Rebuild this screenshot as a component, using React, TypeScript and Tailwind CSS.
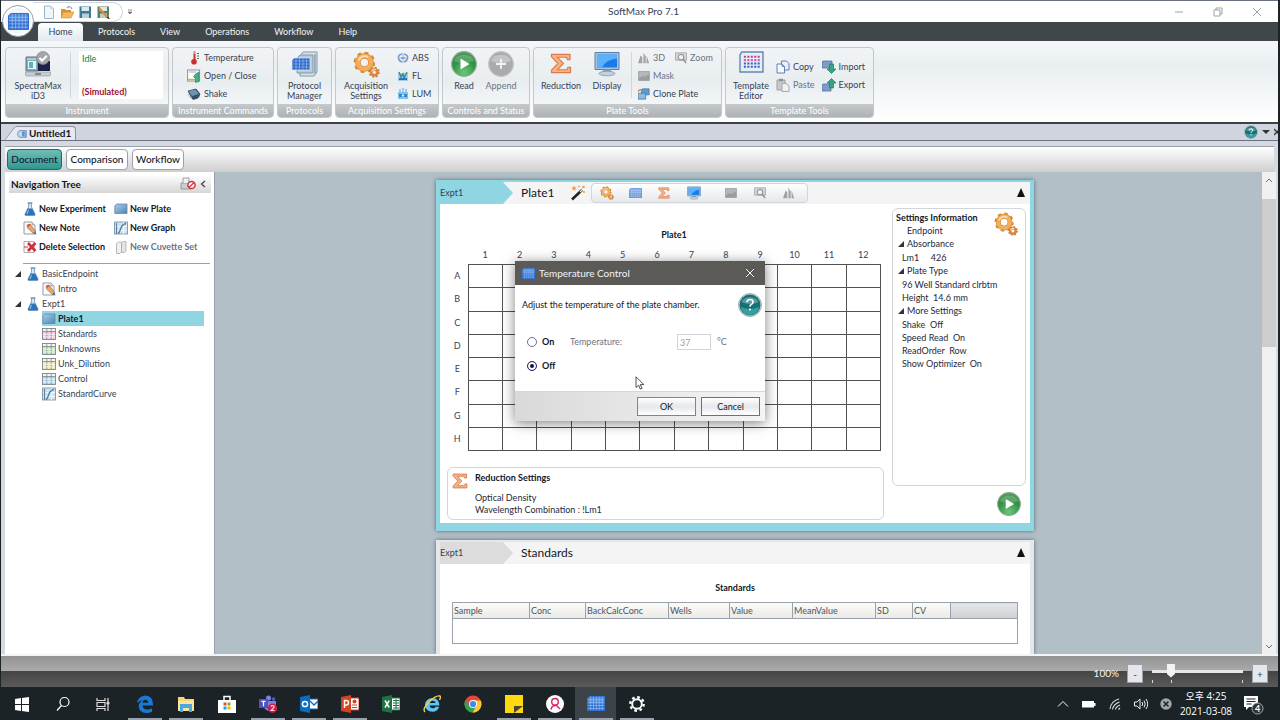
import React from "react";

interface iconProps {
  className?: string;
}

/* ---------- ICONS ---------- */

function PlateIcon({ className }: iconProps) {
  return (
    <svg viewBox="0 0 22 18" className={className} preserveAspectRatio="none">
      <path d="M3 0h18a1 1 0 0 1 1 1v16a1 1 0 0 1-1 1H1a1 1 0 0 1-1-1V3z" fill="#2f6fd0" />
      <path d="M3 1h18v8H1V3z" fill="#5b98ea" opacity=".6" />
      <path
        d="M1 4.500h20M1 8h20M1 11.500h20M1 15h20M4.500 1v16M8 1v16M11.500 1v16M15 1v16M18.500 1v16"
        stroke="#a5c9f8"
        strokeWidth=".7"
      />
    </svg>
  );
}

function FlaskIcon({ className }: iconProps) {
  return (
    <svg viewBox="0 0 12 14" className={className}>
      <path d="M4.500 1v4L1 12q-.5 1.500 1 1.500h8q1.500 0 1-1.500L7.500 5V1z" fill="#d5e6f3" stroke="#6d93b5" strokeWidth=".8" />
      <path d="M3.800 6.500h4.400L11 12.200q.2 1-.8 1H1.800q-1 0-.8-1z" fill="#2d74b5" />
      <path d="M3.500 1h5" stroke="#6d93b5" strokeWidth="1.200" />
      <path d="M4.500 8l-1.500 4" stroke="#9cc8ea" />
    </svg>
  );
}

function NoteIcon({ className }: iconProps) {
  return (
    <svg viewBox="0 0 14 14" className={className}>
      <path d="M1 1h8l3 3v9H1z" fill="#fafafa" stroke="#8d9299" strokeWidth=".9" />
      <path d="M9 1v3h3" fill="#d8dde2" stroke="#8d9299" strokeWidth=".7" />
      <path d="M4 4l3-1 5.500 7-2 2.500L4.500 7z" fill="#e8a667" stroke="#8c6a4c" strokeWidth=".6" />
      <path d="M10 12.500l2.500-2.500 1 3.500z" fill="#5d6fa8" />
      <path d="M4 4l3-1 .8 1L5 6z" fill="#d9534a" />
    </svg>
  );
}

function DeleteIcon({ className }: iconProps) {
  return (
    <svg viewBox="0 0 14 14" className={className}>
      <path d="M1 1.500h10v11H1z" fill="#fafafa" stroke="#a3a3a8" strokeWidth=".9" />
      <path d="M5 3l7.500 8M12.500 3L5 11" stroke="#d32f37" strokeWidth="2.600" />
      <path d="M1 7h4" stroke="#d32f37" />
    </svg>
  );
}

function SmallPlateIcon({ className }: iconProps) {
  return (
    <svg viewBox="0 0 14 12" className={className}>
      <defs>
        <linearGradient id="smallPlate" x1="0" y1="0" x2="1" y2="1">
          <stop offset="0" stopColor="#a9cde8" />
          <stop offset="1" stopColor="#4d86b8" />
        </linearGradient>
      </defs>
      <path d="M2.500 1H13v9.500H.800V3z" fill="url(#smallPlate)" stroke="#5f88aa" strokeWidth=".8" />
    </svg>
  );
}

function GraphIcon({ className }: iconProps) {
  return (
    <svg viewBox="0 0 14 14" className={className}>
      <rect x=".5" y="1" width="13" height="12" fill="#cfe2f0" stroke="#7c97ae" strokeWidth=".9" />
      <path d="M1 9.500h12M1 5.500h12M9.500 1v12" stroke="#fff" strokeWidth=".7" />
      <path d="M4 12.500C7.500 11 5 3.500 12 2.500" fill="none" stroke="#4d7ea8" strokeWidth="1.400" />
      <path d="M2.500 2v11" stroke="#5b84a6" strokeWidth="1.200" />
    </svg>
  );
}

function CuvetteIcon({ className }: iconProps) {
  return (
    <svg viewBox="0 0 14 14" className={className}>
      <path d="M2.500 3.500l2-1.500h3v10l-1.500 1.500H2.500z" fill="#f0f0f0" stroke="#a9a9a9" strokeWidth=".8" />
      <path d="M7.500 3l2-1.500H12v9.500L10.500 12.500h-3z" fill="#e3e3e3" stroke="#a9a9a9" strokeWidth=".8" />
    </svg>
  );
}

function GroupTableIcon({ tint }: { tint: string }) {
  return (
    <svg viewBox="0 0 14 12" className="h-3 w-3.5">
      <rect x=".5" y=".5" width="13" height="11" fill={tint} stroke="#7e868c" strokeWidth=".9" />
      <rect x="1" y="1" width="12" height="2" fill="#f6f6f6" />
      <path d="M.5 3.500h13M4.800.5v11M9.200.5v11" stroke="#7e868c" strokeWidth=".8" />
      <path d="M1 6.200h12M1 8.900h12" stroke="#fff" strokeWidth=".8" />
    </svg>
  );
}

function GearsIcon({ className }: iconProps) {
  return (
    <svg viewBox="0 0 26 26" className={className} fill="none">
      <circle cx="11" cy="11" r="9" stroke="#d98a35" strokeWidth="2.800" strokeDasharray="3.530 3.530" />
      <circle cx="11" cy="11" r="6.300" stroke="#d98a35" strokeWidth="5.400" />
      <circle cx="11" cy="11" r="6.300" stroke="#f2ae5c" strokeWidth="4" />
      <path d="M5.500 9a6 6 0 0 1 9-3" stroke="#fbdcae" strokeWidth="1.800" />
      <circle cx="20.500" cy="20.500" r="4.300" stroke="#c9743a" strokeWidth="2" strokeDasharray="1.690 1.690" />
      <circle cx="20.500" cy="20.500" r="3" stroke="#d98747" strokeWidth="2.800" />
      <path d="M18 19.500a3 3 0 0 1 4-1.500" stroke="#fbdcae" strokeWidth="1.200" />
    </svg>
  );
}

function SigmaIcon({ className }: iconProps) {
  return (
    <svg viewBox="0 0 22 22" className={className} preserveAspectRatio="none">
      <path
        d="M1.500 1.500h18.500v5.500h-2.500l-1-2.500H7.500L13.500 11l-6 6.500h9.500l1-2.500h2.500v5.500H1.500V18L8 11 1.500 4z"
        fill="#f5b488"
        stroke="#dd7a45"
        strokeWidth="1.200"
      />
    </svg>
  );
}

function MonitorIcon({ className }: iconProps) {
  return (
    <svg viewBox="0 0 26 25" className={className}>
      <path d="M1 1h24v17H1z" fill="#a9c3dc" stroke="#5c7ea3" />
      <path d="M3 3h20v13H3z" fill="#1a7be8" />
      <path d="M3 3h20v4Q12 8 8 16H3z" fill="#5db0fa" />
      <path d="M9 18h8v3H9z" fill="#8ca4bb" />
      <ellipse cx="13" cy="22" rx="8" ry="2.300" fill="#c3d0dc" stroke="#7890a8" strokeWidth=".7" />
    </svg>
  );
}

function PlayIcon({ className }: iconProps) {
  return (
    <svg viewBox="0 0 26 26" className={className}>
      <defs>
        <radialGradient id="playGreen" cx=".5" cy=".85" r=".9">
          <stop offset="0" stopColor="#6cc77a" />
          <stop offset=".6" stopColor="#2c8f41" />
          <stop offset="1" stopColor="#5a9b68" />
        </radialGradient>
      </defs>
      <circle cx="13" cy="13" r="12.300" fill="url(#playGreen)" stroke="#88a890" strokeWidth="1.200" />
      <path d="M3 10a10.500 9 0 0 1 20 0q-10 4-20 0z" fill="#fff" opacity=".2" />
      <path d="M9.500 7.500v11l9-5.500z" fill="#fff" />
    </svg>
  );
}

function AppendIcon() {
  return (
    <svg viewBox="0 0 26 26" className="size-[26px]">
      <circle cx="13" cy="13" r="12.300" fill="#a9abad" stroke="#c0c2c4" strokeWidth="1.200" />
      <path d="M3 10a10.500 9 0 0 1 20 0q-10 4-20 0z" fill="#fff" opacity=".3" />
      <path d="M13 8v10M8 13h10" stroke="#f2f2f2" strokeWidth="1.800" />
    </svg>
  );
}

function HelpIcon({ className }: iconProps) {
  return (
    <svg viewBox="0 0 24 24" className={className}>
      <circle cx="12" cy="12" r="11.500" fill="#d5dede" stroke="#8aa0a0" strokeWidth=".8" />
      <circle cx="12" cy="12" r="10.500" fill="#167078" />
      <path d="M3 14a9 8 0 0 0 18 0q-9 4-18 0z" fill="#46b0ac" opacity=".7" />
      <path d="M3.500 9a9 7 0 0 1 17 0q-8 4-17 0z" fill="#fff" opacity=".3" />
      <path d="M9 9.200q0-2.700 3-2.700t3 2.500q0 1.600-1.600 2.400T12 13.700" fill="none" stroke="#fff" strokeWidth="1.600" />
      <circle cx="12" cy="16.500" r="1.100" fill="#fff" />
    </svg>
  );
}

function InstrumentIcon() {
  return (
    <svg viewBox="0 0 26 26" className="size-[26px]">
      <path d="M1 6h12v14H1z" fill="#8da9b8" stroke="#5a7480" />
      <path d="M13 10h12v10H13z" fill="#1c2347" />
      <path d="M3 10h8v8H3z" fill="#e6f4f6" />
      <path d="M4 11h4v6H4z" fill="#4fb6c4" />
      <path d="M2 8h9" stroke="#d8e8ee" />
      <path d="M0 21h26l-1 4H1z" fill="#c9ced3" stroke="#8a9299" strokeWidth=".6" />
      <path d="M10 23h6" stroke="#444" />
      <circle cx="18" cy="7" r="6.500" fill="#a3a6a9" stroke="#84878a" strokeWidth=".7" />
      <path d="M14.500 7l2.500 2.700 4.800-5" fill="none" stroke="#fff" strokeWidth="2" />
    </svg>
  );
}

function ProtocolIcon() {
  return (
    <svg viewBox="0 0 28 28" className="size-7">
      <path d="M12 1h14v20l-3 4H9V5z" fill="#dbe4ec" stroke="#8197a8" />
      <path d="M9 4h13v18H6V7z" fill="#b9c9d7" stroke="#8197a8" />
      <path d="M24 23V3" stroke="#9db0c0" strokeWidth="2" />
      <path d="M3 7h16v12H1V9z" fill="#2b65c8" stroke="#dce8f5" strokeWidth=".8" />
      <path d="M2 10h16M2 13h16M2 16h16M5 8v11M8.500 8v11M12 8v11M15.500 8v11" stroke="#8fbaf0" strokeWidth=".7" />
    </svg>
  );
}

function TemplateIcon() {
  return (
    <svg viewBox="0 0 26 23" className="h-[22px] w-[25px]">
      <path d="M3 1h22v21H1V4z" fill="#e9eef5" stroke="#5d89b8" strokeWidth="1.500" />
      <path d="M5 6h17" stroke="#c0408c" strokeWidth="2.200" strokeDasharray="2.200 1.400" />
      <path d="M5 9.500h17" stroke="#d65ba3" strokeWidth="2.200" strokeDasharray="2.200 1.400" />
      <path d="M5 13h17M5 16.500h17" stroke="#3b64c8" strokeWidth="2.200" strokeDasharray="2.200 1.400" />
    </svg>
  );
}

function ThermoIcon() {
  return (
    <svg viewBox="0 0 14 14" className="size-3.5">
      <path d="M7.500 1v8" stroke="#d9a0a0" strokeWidth="2.600" strokeLinecap="round" />
      <path d="M7.500 3v7" stroke="#c9302c" strokeWidth="1.400" />
      <circle cx="7" cy="10.800" r="2.800" fill="#c9302c" />
      <path d="M10 2.500h2M10 5h2M10 7.500h2" stroke="#555" strokeWidth=".9" />
    </svg>
  );
}

function OpenCloseIcon() {
  return (
    <svg viewBox="0 0 14 14" className="size-3.5">
      <rect x=".6" y="1" width="12" height="11" fill="#fff" stroke="#8b9198" />
      <path d="M2 3h7" stroke="#aab" />
      <path d="M1 10.500h9" stroke="#e0b13c" strokeWidth="1.500" />
      <path d="M8.500 5l3.500-2v9.500l-3.500 1V9.500l-2-1.700z" fill="#43b28b" stroke="#1f7d5c" strokeWidth=".6" />
    </svg>
  );
}

function ShakeIcon() {
  return (
    <svg viewBox="0 0 14 14" className="size-3.5">
      <path d="M1 4l8-2 4 5-2 4-5 1.500z" fill="#31506f" stroke="#1f3042" strokeWidth=".7" />
      <path d="M1.500 4l7-1.500L12 7 5 9z" fill="#6f93b3" />
      <path d="M1 7l3 4.500M13 9.500L9.500 12" stroke="#8a9aa8" strokeWidth=".8" fill="none" />
    </svg>
  );
}

function AbsIcon() {
  return (
    <svg viewBox="0 0 12 12" className="size-3">
      <path d="M5 2Q1 3 1.500 6T5 10M7 2q4 1 3.500 4T7 10" fill="none" stroke="#7e9fcb" strokeWidth="1.700" />
      <path d="M6 1v10" stroke="#a8bfdc" strokeWidth="1.200" />
      <path d="M3.500 6h5" stroke="#3f76bc" />
    </svg>
  );
}

function FlIcon() {
  return (
    <svg viewBox="0 0 12 12" className="size-3">
      <path d="M1 3h10v8H1z" fill="#a6cbe8" />
      <path d="M2 2l2 5 2-3 1 4 3-6" fill="none" stroke="#2f8f8a" strokeWidth="1.400" />
      <path d="M2 9h8" stroke="#2f72b8" strokeWidth="1.800" />
    </svg>
  );
}

function LumIcon() {
  return (
    <svg viewBox="0 0 12 12" className="size-3">
      <path d="M1 4h10v7H1z" fill="#7cc3ee" />
      <path d="M3 1v3M6 0v4M9 1v3" stroke="#5fb4e6" strokeWidth="1.200" />
      <path d="M2 6h8v3H2z" fill="#2f86c8" />
      <circle cx="6" cy="7.500" r="1.200" fill="#d9f0ff" />
    </svg>
  );
}

function CubesIcon() {
  return (
    <svg viewBox="0 0 14 14" className="size-3">
      <path d="M0 13L3 4l2 2v7zM6 13V1l3 4v8zM10 13V4l3 9z" fill="#a0a3a6" />
      <path d="M6 13V1l1 2v10z" fill="#c9cbcd" />
    </svg>
  );
}

function ZoomPlateIcon() {
  return (
    <svg viewBox="0 0 14 14" className="size-3">
      <path d="M.5 1h13v8.500H.5z" fill="#d5d7d9" stroke="#9b9ea1" strokeWidth=".9" />
      <circle cx="7" cy="6" r="3.200" fill="#f3f3f3" stroke="#8d9093" strokeWidth="1.200" />
      <path d="M9.500 8.500l3.500 4.500" stroke="#8d9093" strokeWidth="1.600" />
    </svg>
  );
}

function MaskIcon() {
  return (
    <svg viewBox="0 0 14 12" className="h-2.5 w-3">
      <path d="M.5.5h13v11H.5z" fill="#b4b7b9" stroke="#999c9f" />
      <path d="M1 9l4-3 3 1 5-3v7H1z" fill="#9a9da0" />
    </svg>
  );
}

function ClonePlateIcon() {
  return (
    <svg viewBox="0 0 14 14" className="size-3">
      <path d="M5 1h8v7H4V2z" fill="#5f9bd0" stroke="#3d6f9e" strokeWidth=".8" />
      <path d="M1 6h8v7H0V7z" fill="#8dbbe0" stroke="#3d6f9e" strokeWidth=".8" />
      <path d="M0 5q0-3 3.500-3" fill="none" stroke="#dd7c33" strokeWidth="1.500" />
    </svg>
  );
}

function CopyIcon() {
  return (
    <svg viewBox="0 0 14 14" className="size-3.5">
      <path d="M5.500 1h5l2.500 2.500V10H5.500z" fill="#e9effa" stroke="#5475ad" strokeWidth=".9" />
      <path d="M1 4h5l2.500 2.500V13H1z" fill="#f5f8fe" stroke="#5475ad" strokeWidth=".9" />
      <path d="M6 4v2.500h2.500" fill="none" stroke="#5475ad" strokeWidth=".8" />
    </svg>
  );
}

function PasteIcon() {
  return (
    <svg viewBox="0 0 14 14" className="size-3.5">
      <path d="M1 2h8v10H1z" fill="#c7c9cb" stroke="#a0a2a4" />
      <path d="M3 .8h4v2.400H3z" fill="#8f9193" />
      <path d="M6 5.500h4l3 2.500v5.500H6z" fill="#f1f1f1" stroke="#a0a2a4" strokeWidth=".9" />
    </svg>
  );
}

function TransferIcon({ up }: { up?: boolean }) {
  return (
    <svg viewBox="0 0 14 14" className="size-3.5">
      <path
        d={up ? "M1 6h8v7H0V7z" : "M1 1h9v7H0V2z"}
        fill="#7d9cc8"
        stroke="#5674a4"
        strokeWidth=".8"
      />
      <path
        d={up ? "M7.500 10V5H5l4.500-4.500L14 5h-2.500v5z" : "M7.500 4v5H5l4.500 4.500L14 9h-2.500V4z"}
        fill="#36a583"
        stroke="#1b7a5c"
        strokeWidth=".7"
      />
    </svg>
  );
}

function WandIcon() {
  return (
    <svg viewBox="0 0 16 16" className="size-4">
      <path d="M2 14.500L12 5" stroke="#222" strokeWidth="2.600" />
      <path d="M10 7l2-2" stroke="#eee" strokeWidth="1.200" />
      <path d="M4 .5l.8 1.700 1.800.3-1.300 1.300.3 1.900L4 4.800l-1.600.9.3-1.900L1.400 2.500l1.800-.3z" fill="#f2a33c" />
      <circle cx="13.500" cy="2" r="1.300" fill="#f2a33c" />
      <circle cx="9" cy="1.500" r=".9" fill="#f2a33c" />
      <circle cx="14" cy="7" r="1" fill="#f2a33c" />
    </svg>
  );
}

function CursorIcon() {
  return (
    <svg viewBox="0 0 10 14" className="absolute top-[115px] left-[120px] h-3.5 w-2.5">
      <path d="M1 .8v10.700l2.600-2.300 1.700 3.900 1.700-.8-1.700-3.700h3.500z" fill="#fff" stroke="#222" strokeWidth=".8" />
    </svg>
  );
}

/* ---------- TITLE BAR AND MENU ---------- */

function TitleBar() {
  return (
    <header className="relative flex h-[22px] items-center border-t border-gray-500 bg-white">
      <div className="ml-8 flex h-5 items-center gap-1 rounded-r-full border border-l-0 border-gray-300 pr-3 pl-[9px]">
        <button aria-label="New">
          <svg viewBox="0 0 14 14" className="size-3.5">
            <path d="M2.500 1h6l3 3v9.500h-9z" fill="#eef6fc" stroke="#8aa5ba" strokeWidth=".8" />
            <path d="M8.500 1v3h3z" fill="#b9d3e6" />
          </svg>
        </button>
        <button aria-label="Open">
          <svg viewBox="0 0 14 14" className="size-3.5">
            <path d="M1 4h4l1 1h5v7H1z" fill="#dd9132" />
            <path d="M3 7h11l-3 6H1z" fill="#f6b75c" stroke="#c57d25" strokeWidth=".5" />
            <path d="M7 3q3-3 5 1" fill="none" stroke="#7aa0c0" strokeWidth="1.200" />
          </svg>
        </button>
        <button aria-label="Save">
          <svg viewBox="0 0 14 14" className="size-3.5">
            <path d="M1.500 1.500h11.500v11.500H1.500z" fill="#3f7a91" />
            <path d="M3.500 2h7.500v4H3.500z" fill="#dcebf0" />
            <path d="M4 8.500h7V13H4z" fill="#b5d0da" />
          </svg>
        </button>
        <button aria-label="Save As">
          <svg viewBox="0 0 14 14" className="size-3.5">
            <path d="M1.500 1.500h11.500v11.500H1.500z" fill="#54806d" />
            <path d="M3.500 2h7.500v4H3.500z" fill="#dcebe0" />
            <path d="M4 8.500h7V13H4z" fill="#b5d0c4" />
            <path d="M3 3l9 10" stroke="#e08a3c" strokeWidth="2" />
            <path d="M11 12l2.500 2" stroke="#333" strokeWidth="1.200" />
          </svg>
        </button>
      </div>
      <svg viewBox="0 0 6 6" className="ml-1 size-1.5">
        <path d="M1 1h4M1 3h4L3 5z" stroke="#777" strokeWidth=".8" fill="#777" />
      </svg>
      <h1 className="absolute left-1/2 ml-1 -translate-x-1/2 text-[10px] text-gray-700">SoftMax Pro 7.1</h1>
      <div className="mr-4 ml-auto flex gap-[29px] text-gray-400">
        <button aria-label="Minimize">
          <svg viewBox="0 0 10 10" className="size-2.5" stroke="currentColor">
            <path d="M1 5h8" />
          </svg>
        </button>
        <button aria-label="Restore">
          <svg viewBox="0 0 10 10" className="size-2.5" stroke="currentColor" fill="none">
            <path d="M1 3h6v6H1zM3 3V1h6v6H7" />
          </svg>
        </button>
        <button aria-label="Close">
          <svg viewBox="0 0 10 10" className="size-2.5" stroke="currentColor">
            <path d="M1 1l8 8M9 1L1 9" />
          </svg>
        </button>
      </div>
      <button
        aria-label="Application menu"
        className="absolute top-[4px] left-px z-10 flex size-8 items-center justify-center rounded-full border border-gray-400 bg-gray-100 shadow-[inset_0_0_0_2px_white]"
      >
        <PlateIcon className="h-[17px] w-[21px]" />
      </button>
    </header>
  );
}

const menus = ["Protocols", "View", "Operations", "Workflow", "Help"];

function MenuBar() {
  return (
    <nav className="flex h-[19px] items-end gap-[15px] bg-[#40474b] pl-[37px] text-[9px] text-gray-100">
      <button className="h-[18px] w-[45px] rounded-t-sm bg-gradient-to-b from-white to-slate-200 text-gray-700">
        Home
      </button>
      <div className="flex h-[18px] gap-[25px]">
        {menus.map((m) => (
          <button key={m}>{m}</button>
        ))}
      </div>
    </nav>
  );
}

/* ---------- RIBBON ---------- */

interface groupProps {
  label: string;
  className: string;
  children: React.ReactNode;
}

function RibbonGroup({ label, className, children }: groupProps) {
  return (
    <section
      className={`${className} flex h-[71px] shrink-0 flex-col overflow-hidden rounded-sm border border-[#c3c8cc] bg-gradient-to-b from-[#f1f4f6] via-[#e8edf0] to-[#fafcfc]`}
    >
      <div className="flex flex-1">{children}</div>
      <h2 className="h-[13px] bg-gradient-to-b from-[#c5c9cb] to-[#adb2b5] text-center text-[9px] leading-[13px] whitespace-nowrap text-white">
        {label}
      </h2>
    </section>
  );
}

interface bigButtonProps {
  icon: React.ReactNode;
  lines: string[];
  className: string;
}

function BigButton({ icon, lines, className }: bigButtonProps) {
  return (
    <button className={`${className} flex flex-col items-center pt-[3px] leading-[10px]`}>
      <span className="flex h-[30px] items-start justify-center">{icon}</span>
      {lines.map((l) => (
        <span key={l}>{l}</span>
      ))}
    </button>
  );
}

interface smallButtonProps {
  icon: React.ReactNode;
  label: string;
  muted?: boolean;
}

function SmallButton({ icon, label, muted }: smallButtonProps) {
  return (
    <button
      disabled={muted}
      className={`${muted ? "text-gray-500" : ""} flex h-[18px] items-center gap-[3px] whitespace-nowrap`}
    >
      {icon}
      {label}
    </button>
  );
}

function Ribbon() {
  return (
    <div className="flex h-[83px] gap-[3px] border-b-2 border-[#3b4145] bg-gradient-to-b from-[#f5f8fa] via-[#e9eef1] via-30% to-white px-1 pt-[6px] text-[9px] text-gray-700">
      <RibbonGroup label="Instrument" className="w-[164px]">
        <BigButton className="w-16" icon={<InstrumentIcon />} lines={["SpectraMax", "iD3"]} />
        <div className="mt-1 h-[46px] w-px bg-gray-300" />
        <div className="mt-[3px] ml-2 flex h-12 w-[84px] flex-col justify-between bg-white px-[3px] py-px">
          <p className="text-green-700">Idle</p>
          <p className="font-bold text-[#9b1035]">(Simulated)</p>
        </div>
      </RibbonGroup>
      <RibbonGroup label="Instrument Commands" className="w-[102px]">
        <div className="flex flex-col pt-px pl-[14px]">
          <SmallButton icon={<ThermoIcon />} label="Temperature" />
          <SmallButton icon={<OpenCloseIcon />} label="Open / Close" />
          <SmallButton icon={<ShakeIcon />} label="Shake" />
        </div>
      </RibbonGroup>
      <RibbonGroup label="Protocols" className="w-[55px]">
        <BigButton className="w-full" icon={<ProtocolIcon />} lines={["Protocol", "Manager"]} />
      </RibbonGroup>
      <RibbonGroup label="Acquisition Settings" className="w-[104px]">
        <BigButton className="w-[60px]" icon={<GearsIcon className="size-[27px]" />} lines={["Acquisition", "Settings"]} />
        <div className="flex flex-col pt-px pl-px">
          <SmallButton icon={<AbsIcon />} label="ABS" />
          <SmallButton icon={<FlIcon />} label="FL" />
          <SmallButton icon={<LumIcon />} label="LUM" />
        </div>
      </RibbonGroup>
      <RibbonGroup label="Controls and Status" className="w-[88px]">
        <BigButton className="w-[42px]" icon={<PlayIcon className="size-[26px]" />} lines={["Read"]} />
        <BigButton className="w-8 text-gray-500" icon={<AppendIcon />} lines={["Append"]} />
      </RibbonGroup>
      <RibbonGroup label="Plate Tools" className="w-[189px]">
        <BigButton className="w-[54px]" icon={<SigmaIcon className="mt-[2px] h-[21px] w-[22px]" />} lines={["Reduction"]} />
        <BigButton className="w-[38px]" icon={<MonitorIcon className="size-[26px]" />} lines={["Display"]} />
        <div className="mt-1 ml-[5px] h-[46px] w-px bg-gray-300" />
        <div className="flex flex-col pt-px pl-[6px]">
          <div className="flex gap-[10px]">
            <SmallButton icon={<CubesIcon />} label="3D" muted />
            <SmallButton icon={<ZoomPlateIcon />} label="Zoom" muted />
          </div>
          <SmallButton icon={<MaskIcon />} label="Mask" muted />
          <SmallButton icon={<ClonePlateIcon />} label="Clone Plate" />
        </div>
      </RibbonGroup>
      <RibbonGroup label="Template Tools" className="w-[149px]">
        <BigButton className="w-[50px]" icon={<TemplateIcon />} lines={["Template", "Editor"]} />
        <div className="grid grid-cols-[auto_auto] content-center gap-x-[7px] pb-px">
          <SmallButton icon={<CopyIcon />} label="Copy" />
          <SmallButton icon={<TransferIcon />} label="Import" />
          <SmallButton icon={<PasteIcon />} label="Paste" muted />
          <SmallButton icon={<TransferIcon up />} label="Export" />
        </div>
      </RibbonGroup>
    </div>
  );
}

/* ---------- DOCUMENT TABS ---------- */

function DocumentTabs() {
  return (
    <div className="flex h-[17px] items-end border-b border-gray-500 bg-[#d0d4de] pl-1">
      <svg viewBox="0 0 12 14" className="h-3.5 w-3">
        <path d="M0 14L9 2q1.500-1.500 3-1.500V14z" fill="#e6e9ef" />
        <path d="M0 14L9 2q1.500-1.500 3-1.500" fill="none" stroke="#8b909a" strokeWidth=".8" />
      </svg>
      <button className="flex h-3.5 items-center gap-[2px] rounded-tr-sm border-t border-r border-[#8b909a] bg-[#e6e9ef] pr-1 text-[10px] font-bold text-gray-900">
        <svg viewBox="0 0 10 10" className="size-2.5">
          <rect x="2" y="1" width="8" height="8" rx="1" fill="#8aa9c9" />
          <circle cx="4" cy="5" r="3.500" fill="#bfd8ee" stroke="#6a94bd" strokeWidth=".8" />
          <path d="M6 3v4" stroke="#2f6fb5" strokeWidth="1.200" />
        </svg>
        Untitled1
      </button>
      <div className="mb-px ml-auto flex items-center gap-1">
        <HelpIcon className="size-3.5" />
        <svg viewBox="0 0 8 6" className="h-1.5 w-2">
          <path d="M0 1h8L4 5z" fill="#333" />
        </svg>
        <svg viewBox="0 0 4 8" className="h-2 w-1">
          <path d="M0 1l6 6M6 1L0 7" stroke="#333" strokeWidth="1.300" />
        </svg>
      </div>
    </div>
  );
}

function ViewTabs() {
  return (
    <div className="mx-1 mt-[5px] flex h-[26px] items-center gap-1 border-t border-gray-400 bg-gradient-to-b from-white to-[#cfcfcf] px-[2px] text-[10px] font-medium text-gray-900">
      <button className="h-[21px] w-[55px] rounded-[4px] border border-teal-700 bg-gradient-to-b from-[#6fbdb8] to-[#2f9790]">
        Document
      </button>
      <button className="h-[21px] w-[62px] rounded-[4px] border border-gray-400 bg-white">Comparison</button>
      <button className="h-[21px] w-[52px] rounded-[4px] border border-gray-400 bg-white">Workflow</button>
    </div>
  );
}

/* ---------- NAVIGATION TREE ---------- */

function TreeArrow() {
  return (
    <svg viewBox="0 0 6 6" className="size-1.5">
      <path d="M6 0v6H0z" fill="#333" />
    </svg>
  );
}

const treeCommands = [
  { label: "New Experiment", icon: <FlaskIcon className="h-3.5 w-3" /> },
  { label: "New Plate", icon: <SmallPlateIcon className="h-3 w-3.5" /> },
  { label: "New Note", icon: <NoteIcon className="size-3.5" /> },
  { label: "New Graph", icon: <GraphIcon className="size-3.5" /> },
  { label: "Delete Selection", icon: <DeleteIcon className="size-3.5" /> },
  { label: "New Cuvette Set", icon: <CuvetteIcon className="size-3.5" />, muted: true },
];

const tree = [
  { label: "BasicEndpoint", root: true },
  { label: "Intro", icon: <NoteIcon className="size-3.5" /> },
  { label: "Expt1", root: true },
  { label: "Plate1", icon: <SmallPlateIcon className="h-3 w-3.5" />, selected: true },
  { label: "Standards", icon: <GroupTableIcon tint="#f3c9da" /> },
  { label: "Unknowns", icon: <GroupTableIcon tint="#c3e6bd" /> },
  { label: "Unk_Dilution", icon: <GroupTableIcon tint="#f0eab0" /> },
  { label: "Control", icon: <GroupTableIcon tint="#b7dcf2" /> },
  { label: "StandardCurve", icon: <GraphIcon className="size-3.5" /> },
];

function NavigationTree() {
  return (
    <aside className="w-[210px] shrink-0 border-r border-gray-400 bg-white pt-[3px] pl-1">
      <div className="mr-[3px] flex h-[18px] items-center bg-gradient-to-b from-white to-[#d6d6d6] px-[2px]">
        <h2 className="text-[10px] font-bold text-gray-900">Navigation Tree</h2>
        <svg viewBox="0 0 16 14" className="ml-auto h-3.5 w-4">
          <path d="M1 6h10v6H1z" fill="#c9ced4" stroke="#858b93" strokeWidth=".8" />
          <path d="M3 6V1h6v5" fill="#eef2f6" stroke="#858b93" strokeWidth=".8" />
          <circle cx="11.500" cy="8" r="3.600" fill="#fff" stroke="#cf3338" strokeWidth="1.500" />
          <path d="M9 10.500l5-5" stroke="#cf3338" strokeWidth="1.300" />
        </svg>
        <svg viewBox="0 0 6 8" className="mr-[3px] ml-1 h-2 w-1.5">
          <path d="M5 1L1.500 4 5 7" fill="none" stroke="#444" strokeWidth="1.300" />
        </svg>
      </div>
      <div className="mt-[6px] mr-1 ml-[14px] grid grid-cols-[91px_auto] border-b border-gray-400 pb-[7px]">
        {treeCommands.map((c) => (
          <button
            key={c.label}
            disabled={c.muted}
            className={`${
              c.muted ? "text-gray-500" : "text-gray-900"
            } flex h-[19px] items-center gap-[2px] text-[9px] font-bold whitespace-nowrap`}
          >
            <span className="flex w-3.5 shrink-0 justify-center">{c.icon}</span>
            {c.label}
          </button>
        ))}
      </div>
      <ul className="mt-[2px] mr-[10px] ml-[6px] text-[9px] text-gray-700">
        {tree.map((t) =>
          t.root ? (
            <li key={t.label} className="flex h-[15px] items-center">
              <TreeArrow />
              <FlaskIcon className="mr-[3px] ml-[6px] h-3.5 w-3" />
              {t.label}
            </li>
          ) : (
            <li
              key={t.label}
              className={`${
                t.selected ? "bg-[#90d6e2] font-bold text-gray-900" : ""
              } ml-[27px] flex h-[15px] items-center gap-[2px]`}
            >
              {t.icon}
              {t.label}
            </li>
          )
        )}
      </ul>
    </aside>
  );
}

/* ---------- SECTION CARDS ---------- */

interface headerProps {
  title: string;
  active?: boolean;
  children?: React.ReactNode;
}

function SectionHeader({ title, active, children }: headerProps) {
  return (
    <div className="flex h-[22px] items-center bg-[#f4f4f4]">
      <div
        className={`${
          active ? "bg-[#90d6e2]" : "bg-[#dcdcdc]"
        } h-full w-[73px] text-[9px] leading-[22px] text-gray-700 [clip-path:polygon(0_0,63px_0,100%_50%,63px_100%,0_100%)]`}
      >
        Expt1
      </div>
      <h2 className="ml-2 text-[12px] text-gray-900">{title}</h2>
      {children}
      <svg viewBox="0 0 8 10" className="mr-[5px] ml-auto h-2.5 w-2">
        <path d="M4 0l4 9H0z" fill="#111" />
      </svg>
    </div>
  );
}

const columns = [1, 2, 3, 4, 5, 6, 7, 8, 9, 10, 11, 12];
const rows = ["A", "B", "C", "D", "E", "F", "G", "H"];

function PlateGrid() {
  return (
    <table className="h-[202px] w-[434px] table-fixed border-collapse text-[9px] text-gray-700">
      <caption className="h-[21px] pt-px pl-5 leading-3 font-bold text-gray-900">Plate1</caption>
      <thead>
        <tr className="h-[15px]">
          <th className="w-[21px]" />
          {columns.map((c) => (
            <th key={c} className="pb-[3px] leading-3 font-normal">
              {c}
            </th>
          ))}
        </tr>
      </thead>
      <tbody>
        {rows.map((r) => (
          <tr key={r} className="h-[23px]">
            <th className="leading-3 font-normal">{r}</th>
            {columns.map((c) => (
              <td key={c} className="border border-neutral-600" />
            ))}
          </tr>
        ))}
      </tbody>
    </table>
  );
}

const settings = [
  { text: "Absorbance", head: true },
  { text: "Lm1     426" },
  { text: "Plate Type", head: true },
  { text: "96 Well Standard clrbtm" },
  { text: "Height  14.6 mm" },
  { text: "More Settings", head: true },
  { text: "Shake  Off" },
  { text: "Speed Read  On" },
  { text: "ReadOrder  Row" },
  { text: "Show Optimizer  On" },
];

function SettingsPanel() {
  return (
    <div className="h-[278px] rounded-md border border-gray-300 pt-[3px] pl-[3px] text-[9px] text-gray-800">
      <div className="flex justify-between pr-[7px]">
        <div>
          <h3 className="leading-3 font-bold text-gray-900">Settings Information</h3>
          <p className="pl-[11px] leading-[13px]">Endpoint</p>
        </div>
        <GearsIcon className="size-6" />
      </div>
      {settings.map((s) =>
        s.head ? (
          <p key={s.text} className="flex items-center gap-[3px] pl-[2px] leading-[14px]">
            <TreeArrow />
            {s.text}
          </p>
        ) : (
          <p key={s.text} className="pl-[6px] leading-[13px] whitespace-pre">
            {s.text}
          </p>
        )
      )}
    </div>
  );
}

function PlateCard() {
  return (
    <section className="border-x-4 border-t-2 border-b-8 border-[#90d6e2] bg-white shadow-[0_0_4px_#50646e]">
      <SectionHeader title="Plate1" active>
        <span className="ml-4">
          <WandIcon />
        </span>
        <div className="ml-[5px] flex h-5 w-[217px] items-center rounded-sm border border-gray-300 bg-gradient-to-b from-white to-gray-200 pl-2">
          <button className="flex w-[29px]" aria-label="Settings">
            <GearsIcon className="size-3.5" />
          </button>
          <button className="flex w-[29px]" aria-label="Template">
            <PlateIcon className="h-2.5 w-[13px] opacity-70" />
          </button>
          <button className="flex w-[29px]" aria-label="Reduction">
            <SigmaIcon className="size-3" />
          </button>
          <button className="flex w-[38px]" aria-label="Display">
            <MonitorIcon className="size-3.5" />
          </button>
          <button className="flex w-[29px]" aria-label="Mask" disabled>
            <MaskIcon />
          </button>
          <button className="flex w-[29px]" aria-label="Zoom" disabled>
            <ZoomPlateIcon />
          </button>
          <button className="flex" aria-label="3D" disabled>
            <CubesIcon />
          </button>
        </div>
      </SectionHeader>
      <div className="flex justify-between pt-1 pr-1 pb-[3px] pl-[7px]">
        <div className="w-[437px] pt-5">
          <PlateGrid />
          <div className="mt-4 flex h-[53px] gap-[7px] rounded-md border border-gray-300 pt-1 pl-1">
            <SigmaIcon className="mt-px size-4" />
            <div className="text-[9px] leading-3 text-gray-800">
              <h3 className="font-bold text-gray-900">Reduction Settings</h3>
              <p className="mt-2">Optical Density</p>
              <p>Wavelength Combination : !Lm1</p>
            </div>
          </div>
        </div>
        <div className="w-[134px]">
          <SettingsPanel />
          <button className="mt-[6px] mr-[5px] ml-auto block" aria-label="Read plate">
            <PlayIcon className="size-6" />
          </button>
        </div>
      </div>
    </section>
  );
}

function StandardsCard() {
  return (
    <section className="min-h-0 flex-1 border-x-4 border-t-2 border-gray-200 bg-white shadow-[0_0_4px_#50646e]">
      <SectionHeader title="Standards" />
      <div className="px-3 pt-[18px]">
        <h3 className="text-center text-[9px] leading-3 font-bold text-gray-900">Standards</h3>
        <table className="mt-2 w-full table-fixed border border-gray-400 text-left text-[9px] text-gray-600">
          <thead>
            <tr className="h-4 bg-gradient-to-b from-[#fbfbf8] to-[#eae9e4] [&>th]:border-r [&>th]:border-b [&>th]:border-gray-400 [&>th]:px-px [&>th]:leading-[15px] [&>th]:font-normal">
              <th className="w-[77px]">Sample</th>
              <th className="w-[56px]">Conc</th>
              <th className="w-[83px]">BackCalcConc</th>
              <th className="w-[61px]">Wells</th>
              <th className="w-[63px]">Value</th>
              <th className="w-[83px]">MeanValue</th>
              <th className="w-[37px]">SD</th>
              <th className="w-[38px]">CV</th>
              <th className="bg-gradient-to-b from-[#e5e7e8] to-[#cdd0d2]" />
            </tr>
          </thead>
          <tbody>
            <tr className="h-[25px]">
              <td colSpan={9} />
            </tr>
          </tbody>
        </table>
      </div>
    </section>
  );
}

/* ---------- DIALOG ---------- */

function TemperatureDialog() {
  return (
    <div
      role="dialog"
      aria-labelledby="dialogTitle"
      className="absolute top-[89px] left-1/2 z-20 w-[250px] -translate-x-1/2 bg-white text-[9px] text-gray-900 shadow-[0_2px_12px_rgba(0,0,0,0.5)]"
    >
      <div className="flex h-6 items-center gap-1 bg-[#5c5a57] px-[7px] text-gray-100">
        <PlateIcon className="h-[11px] w-[13px]" />
        <h2 id="dialogTitle" className="text-[10px]">
          Temperature Control
        </h2>
        <button className="mr-[3px] ml-auto" aria-label="Close dialog">
          <svg viewBox="0 0 10 10" className="size-2.5" stroke="currentColor">
            <path d="M1 1l8 8M9 1L1 9" />
          </svg>
        </button>
      </div>
      <div className="h-[106px] pr-[3px] pl-[7px]">
        <div className="flex h-[39px] items-center justify-between">
          <p>Adjust the temperature of the plate chamber.</p>
          <HelpIcon className="size-6" />
        </div>
        <div className="flex h-9 items-center pl-[5px]">
          <input
            type="radio"
            id="on"
            name="power"
            className="size-2.5 appearance-none rounded-full border border-gray-500 checked:border-indigo-900 checked:bg-gray-900 checked:shadow-[inset_0_0_0_2px_white]"
          />
          <label htmlFor="on" className="w-[33px] pl-[5px] font-bold">
            On
          </label>
          <label htmlFor="degrees" className="w-[107px] text-gray-500">
            Temperature:
          </label>
          <input
            id="degrees"
            disabled
            defaultValue="37"
            className="h-4 w-[34px] border border-gray-300 px-[2px] text-gray-400"
          />
          <span className="pl-[6px] text-gray-500">°C</span>
        </div>
        <div className="flex h-3 items-center pl-[5px]">
          <input
            type="radio"
            id="off"
            name="power"
            defaultChecked
            className="size-2.5 appearance-none rounded-full border border-gray-500 checked:border-indigo-900 checked:bg-gray-900 checked:shadow-[inset_0_0_0_2px_white]"
          />
          <label htmlFor="off" className="pl-[5px] font-bold">
            Off
          </label>
        </div>
      </div>
      <div className="flex h-[30px] items-center justify-end gap-[5px] border-t border-gray-300 bg-gradient-to-r from-[#d9d9d9] to-[#f5f5f5] pr-[5px]">
        <button className="h-[19px] w-[59px] border border-[#4a94cc] bg-gradient-to-b from-white via-gray-200 to-white">
          OK
        </button>
        <button className="h-[19px] w-[59px] border border-gray-500 bg-gradient-to-b from-white via-gray-200 to-white">
          Cancel
        </button>
      </div>
      <CursorIcon />
    </div>
  );
}

function ScrollBar() {
  return (
    <div className="flex w-[14px] shrink-0 flex-col bg-[#f0f0f0] text-gray-500">
      <svg viewBox="0 0 14 27" className="h-[27px] w-[14px]" fill="none" stroke="currentColor">
        <path d="M4 10l3-3 3 3" />
      </svg>
      <div className="h-[148px] bg-[#cdcdcd]" />
      <svg viewBox="0 0 14 14" className="mt-auto size-3.5" fill="none" stroke="currentColor">
        <path d="M4 5l3 3 3-3" />
      </svg>
    </div>
  );
}

/* ---------- STATUS BAR ---------- */

function StatusBar() {
  return (
    <footer className="flex h-[33px] items-center justify-end border-t-2 border-gray-100 bg-[linear-gradient(#929292,#ababab_50%,#454545_50%,#5a5a5a)] pt-1 pr-[10px] text-[10px] text-gray-100">
      <output htmlFor="zoom" className="mr-2">
        100%
      </output>
      <button className="h-[19px] w-4 border border-gray-400 bg-gray-200 leading-4 text-gray-700">-</button>
      <div className="mx-[9px] w-[91px]">
        <input
          type="range"
          id="zoom"
          aria-label="Zoom"
          defaultValue={18}
          className="block h-3.5 w-full appearance-none bg-transparent [&::-webkit-slider-runnable-track]:h-[3px] [&::-webkit-slider-runnable-track]:bg-gray-200 [&::-webkit-slider-thumb]:-mt-[6px] [&::-webkit-slider-thumb]:h-3.5 [&::-webkit-slider-thumb]:w-2 [&::-webkit-slider-thumb]:appearance-none [&::-webkit-slider-thumb]:bg-gray-100 [&::-webkit-slider-thumb]:[clip-path:polygon(0_0,100%_0,100%_75%,50%_100%,0_75%)]"
        />
        <div className="mt-[2px] flex h-[3px] [&>i]:w-px [&>i]:bg-gray-300">
          <i />
          <i className="ml-[18px]" />
          <i className="ml-auto" />
        </div>
      </div>
      <button className="h-[19px] w-4 border border-gray-400 bg-gray-200 leading-4 text-gray-700">+</button>
    </footer>
  );
}

/* ---------- TASKBAR ---------- */

const apps = [
  {
    name: "Start",
    icon: <path d="M2 4l6-1v6H2zM9 3l7-1v7H9zM2 10h6v6l-6-1zM9 10h7v7l-7-1z" fill="#fff" />,
  },
  {
    name: "Search",
    icon: (
      <g fill="none" stroke="#fff" strokeWidth="1.200">
        <circle cx="10.500" cy="7" r="4.500" />
        <path d="M7.500 10.500L3 15.500" />
      </g>
    ),
  },
  {
    name: "Task View",
    icon: (
      <g fill="none" stroke="#ddd" strokeWidth="1.200">
        <path d="M2 3v2.500h8V3M2 7.500h8v4H2zM2 16v-2.500h8V16M13 3v13" />
        <circle cx="13" cy="8" r="1" fill="#ddd" />
      </g>
    ),
  },
  {
    name: "Edge",
    running: true,
    icon: (
      <path
        d="M1 8q1-7 8.500-7.500Q17 1 17 9v1.500H6.500Q7 14.500 11 14.500q3 0 5-1.300v3.500q-2.500 1.300-5.500 1.300-7.500 0-7.800-7Q3 7 7 5.300 3.500 5.500 1 8zM6.500 7.700h5.700Q12 4.700 9.500 4.700T6.500 7.700z"
        fill="#1979d6"
      />
    ),
  },
  {
    name: "File Explorer",
    running: true,
    icon: (
      <g>
        <path d="M1 2h6l1 2h9v12H1z" fill="#f7d774" />
        <path d="M1 6h16v10H1z" fill="#fbe79a" />
        <path d="M3 9h12v8h-3v-4H6v4H3z" fill="#4ba7dc" />
      </g>
    ),
  },
  {
    name: "Store",
    icon: (
      <g>
        <path d="M6 5V1.500h6V5" fill="none" stroke="#fff" strokeWidth="1.500" />
        <path d="M0 5h18v13H0z" fill="#fff" />
        <path d="M5.500 7.500h3v3h-3z" fill="#e8502a" />
        <path d="M9.500 7.500h3v3h-3z" fill="#7fb800" />
        <path d="M5.500 11.500h3v3h-3z" fill="#1aa0e6" />
        <path d="M9.500 11.500h3v3h-3z" fill="#f8b500" />
      </g>
    ),
  },
  {
    name: "Teams",
    running: true,
    icon: (
      <g>
        <circle cx="9.500" cy="3" r="2.500" fill="#7b83eb" />
        <circle cx="14.500" cy="4" r="1.800" fill="#5059c9" />
        <path d="M5 6h12v7q-3 4-7 3t-5-4z" fill="#7b83eb" />
        <path d="M0 4h9v9H0z" fill="#4b53bc" />
        <path d="M2.500 6.300h4M4.500 6.300v5" stroke="#fff" strokeWidth="1.300" />
        <circle cx="13.500" cy="13.300" r="4.700" fill="#d01c44" />
        <text x="13.500" y="16.300" fontSize="8" fontWeight="700" textAnchor="middle" fill="#fff">2</text>
      </g>
    ),
  },
  {
    name: "Outlook",
    running: true,
    icon: (
      <g>
        <path d="M9 4h9v10H9z" fill="#fff" stroke="#0a6cc0" />
        <path d="M10 6l4 4 4-4" fill="none" stroke="#0a6cc0" strokeWidth="1.300" />
        <path d="M0 2l10-2v18L0 16z" fill="#0a6cc0" />
        <circle cx="5" cy="9" r="2.600" fill="none" stroke="#fff" strokeWidth="1.500" />
      </g>
    ),
  },
  {
    name: "PowerPoint",
    running: true,
    icon: (
      <g>
        <path d="M9 3h9v12H9z" fill="#fff" stroke="#d04424" />
        <path d="M11 10h5M11 12.500h5" stroke="#d04424" />
        <circle cx="13.500" cy="6.500" r="2" fill="#d04424" />
        <path d="M0 2l10-2v18L0 16z" fill="#d04424" />
        <path d="M3.500 13V5.500h2q2 0 2 2.200t-2 2.200h-2" fill="none" stroke="#fff" strokeWidth="1.500" />
      </g>
    ),
  },
  {
    name: "Excel",
    icon: (
      <g>
        <path d="M9 3h9v12H9z" fill="#fff" stroke="#1f7244" />
        <path d="M11 5.500h6M11 8h6M11 10.500h6M11 13h6M14 4v10" stroke="#1f7244" />
        <path d="M0 2l10-2v18L0 16z" fill="#1f7244" />
        <path d="M3 5.500l4.200 7M7.200 5.500L3 12.500" stroke="#fff" strokeWidth="1.500" />
      </g>
    ),
  },
  {
    name: "Internet Explorer",
    icon: (
      <g>
        <path
          d="M2 9.500Q3 3 9.500 3T16.500 10.500H6.500q.5 2.700 3.300 2.700 2 0 2.700-1.500h3.700q-1.700 5-6.700 5Q2.500 16.500 2 9.500zM6.500 8h6.200Q12 5.700 9.500 5.700T6.500 8z"
          fill="#5cc4f2"
        />
        <path d="M2 17Q-1 14 6 7t11-6q1 1-.5 4" fill="none" stroke="#f5d04a" strokeWidth="1.400" />
      </g>
    ),
  },
  {
    name: "Chrome",
    icon: (
      <g>
        <circle cx="9" cy="9" r="8.500" fill="#e5483b" />
        <path d="M1.600 4.800A8.500 8.500 0 0 0 8.500 17.500L12.500 11 9 9 5.500 11z" fill="#2ea44f" />
        <path d="M8.500 17.500A8.500 8.500 0 0 0 16.700 5.500H9l3.500 5.500z" fill="#fbcb2d" />
        <circle cx="9" cy="9" r="4" fill="#fff" />
        <circle cx="9" cy="9" r="3.100" fill="#4285f4" />
      </g>
    ),
  },
  {
    name: "Sticky Notes",
    running: true,
    icon: (
      <g>
        <path d="M0 0h18v18H0z" fill="#ffd90f" />
        <path d="M9 18v-7h9z" fill="#4a4637" />
      </g>
    ),
  },
  {
    name: "Recorder",
    running: true,
    icon: (
      <g>
        <circle cx="9" cy="9" r="9" fill="#fff" />
        <circle cx="9" cy="6.800" r="3.300" fill="none" stroke="#d5245e" strokeWidth="1.400" />
        <path d="M5 14.500q1-4.500 5-4M10 10l4 4" fill="none" stroke="#d5245e" strokeWidth="1.400" />
      </g>
    ),
  },
  { name: "SoftMax Pro", running: true, active: true, icon: null },
  {
    name: "Settings",
    running: true,
    icon: (
      <g fill="none" stroke="#fff">
        <circle cx="9" cy="9" r="6.700" strokeWidth="2.400" strokeDasharray="2.630 2.630" />
        <circle cx="9" cy="9" r="4.800" strokeWidth="1.900" />
      </g>
    ),
  },
];

function Taskbar() {
  return (
    <div className="flex h-[33px] bg-[#1c2327] pl-px text-white">
      {apps.map((a) => (
        <button
          key={a.name}
          aria-label={a.name}
          className={`${a.active ? "bg-[#3d4449]" : ""} relative flex w-[41px] items-center justify-center`}
        >
          {a.icon ? (
            <svg viewBox="0 0 18 18" className="size-[18px]">
              {a.icon}
            </svg>
          ) : (
            <PlateIcon className="h-[15px] w-[18px]" />
          )}
          {a.running && <span className="absolute bottom-0 h-[2px] w-[34px] bg-gray-400" />}
        </button>
      ))}
      <div className="mr-[6px] ml-auto flex items-center gap-3">
        <svg viewBox="0 0 14 14" className="size-3.5" fill="none" stroke="#fff">
          <path d="M2 9.500l5-5 5 5" />
        </svg>
        <svg viewBox="0 0 14 14" className="size-3.5">
          <path d="M0 4h12v6.500H0zM12 6h1.500v3H12z" fill="#fff" />
        </svg>
        <svg viewBox="0 0 14 14" className="size-3.5" fill="none" stroke="#ddd" strokeWidth="1.100">
          <path d="M2 12Q3 4 11 2M4.500 12.500Q5.500 7 11.500 5M7.500 12.500Q8 9.500 12 8M10.500 12.500l1.500-1.500" />
        </svg>
        <svg viewBox="0 0 14 14" className="size-3.5" fill="none" stroke="#eee">
          <path d="M.5 5h2.500l3-3v10L3 9H.500zM8 5q1.500 2 0 4M10 3.500q2.500 3.500 0 7M12 2q3.500 5 0 10" />
        </svg>
        <svg viewBox="0 0 12 12" className="size-3">
          <circle cx="6" cy="6" r="5.700" fill="#a5a8aa" />
          <path d="M3.500 3.500l5 5M8.500 3.500l-5 5" stroke="#1c2327" strokeWidth="1.500" />
        </svg>
      </div>
      <div className="flex w-14 flex-col items-center justify-center text-[10px] leading-[15px]">
        <span className="font-['Open_Sans','Noto_Sans_CJK_KR',sans-serif]">오후 4:25</span>
        <span className="font-['Open_Sans',sans-serif]">2021-03-08</span>
      </div>
      <div className="mr-2 flex w-[38px] items-center justify-center">
        <svg viewBox="0 0 22 22" className="size-[22px]">
          <path d="M2 3h14v11H7l-3 3v-3H2z" fill="#fff" />
          <path d="M4.500 6h9M4.500 8.500h9M4.500 11h5" stroke="#1c2327" />
          <circle cx="15.500" cy="15.500" r="5.500" fill="#2b3236" stroke="#aaa" />
          <text x="15.500" y="18.800" fontSize="9" fontWeight="700" textAnchor="middle" fill="#fff">4</text>
        </svg>
      </div>
    </div>
  );
}

export default function App() {
  return (
    <div className="flex h-screen flex-col overflow-hidden bg-[#1c2327] font-['Lato','Noto_Sans_CJK_KR',sans-serif]">
      <div className="mr-[2px] ml-px flex min-h-0 flex-1 flex-col bg-[#d6d9e0]">
        <TitleBar />
        <MenuBar />
        <Ribbon />
        <DocumentTabs />
        <ViewTabs />
        <main className="mr-[2px] ml-1 flex min-h-0 flex-1">
          <NavigationTree />
          <div className="flex min-w-0 flex-1 justify-center bg-[#b3bfc7] pt-2">
            <div className="mr-[7px] flex w-[598px] flex-col gap-[9px]">
              <PlateCard />
              <StandardsCard />
            </div>
          </div>
          <ScrollBar />
        </main>
        <StatusBar />
      </div>
      <Taskbar />
      <div className="absolute inset-x-0 top-[172px] h-0">
        <TemperatureDialog />
      </div>
    </div>
  );
}
